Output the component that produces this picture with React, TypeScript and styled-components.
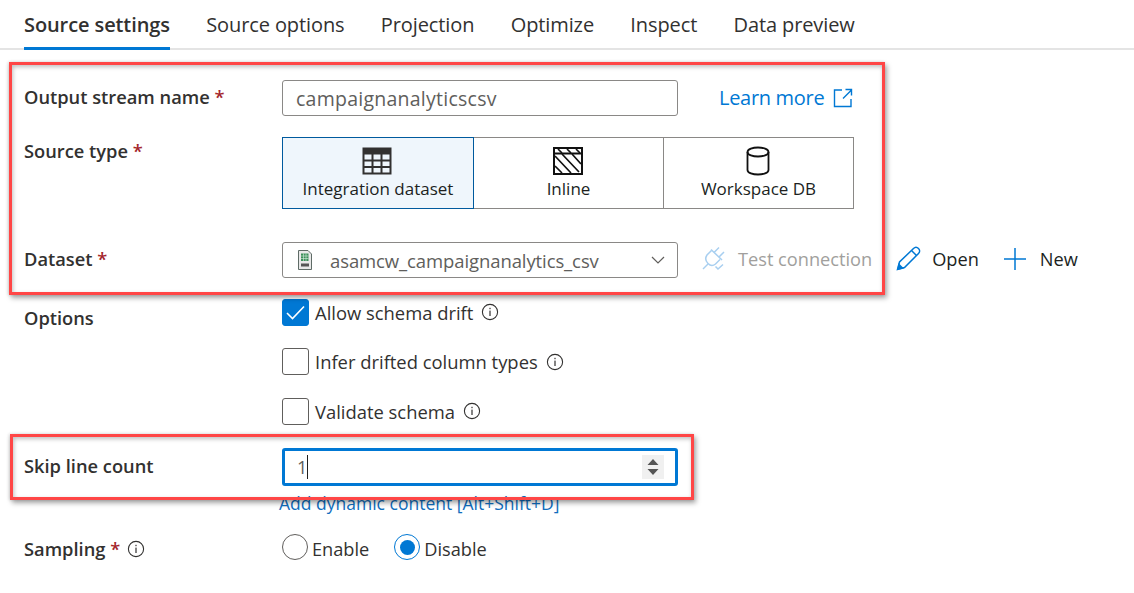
import React from "react";
import styled, { createGlobalStyle } from "styled-components";

const Global = createGlobalStyle`
  html, body { margin: 0; padding: 0; background: #fff; }
  body { font-family: "Open Sans", "Noto Sans", "Liberation Sans", sans-serif; color: #323130; }
`;
const Page = styled.div`
  position: relative;
  width: 1134px;
  height: 593px;
  overflow: hidden;
  font-size: 18px;
`;
const Tabs = styled.div`
  display: flex;
  gap: 36.3px;
  height: 48px;
  padding-left: 24px;
  border-bottom: 2px solid #e4e4e4;
`;
const Tab = styled.div<{ $active?: boolean }>`
  height: 47px;
  line-height: 50px;
  box-sizing: border-box;
  font-size: 20px;
  font-weight: ${(p) => (p.$active ? 600 : 400)};
  letter-spacing: -0.1px;
  box-shadow: ${(p) => (p.$active ? "0 3px 0 #0078d4" : "none")};
  white-space: nowrap;
`;
const Form = styled.div`
  display: flex;
  flex-direction: column;
  padding-left: 24px;
`;
const Row = styled.div<{ $top: number }>`
  display: grid;
  grid-template-columns: 258px 1fr;
  margin-top: ${(p) => p.$top}px;
  align-items: start;
`;
const Label = styled.div<{ $pad: number }>`
  display: flex;
  align-items: center;
  gap: 7px;
  padding-top: ${(p) => p.$pad}px;
  font-size: 18.3px;
  line-height: 24px;
  font-weight: 600;
  white-space: nowrap;
`;
const Star = styled.span`
  color: #a4262c;
  font-weight: 600;
`;
const Controls = styled.div`
  display: flex;
  align-items: center;
`;
const Field = styled.div`
  width: 396px;
  height: 36px;
  box-sizing: border-box;
  border: 1px solid #8a8886;
  border-radius: 3px;
  display: flex;
  align-items: center;
  padding: 0 13px;
  color: #605e5c;
  font-size: 19.5px;
  letter-spacing: 0.25px;
  flex: none;
`;
const SelectField = styled(Field)`
  padding: 0 12px 0 15px;
  gap: 18px;
  font-size: 18.5px;
  letter-spacing: -0.1px;
`;
const SelectText = styled.span`
  flex: 1;
`;
const LearnLink = styled.a`
  display: flex;
  align-items: center;
  gap: 9px;
  margin-left: 41px;
  color: #0078d4;
  font-size: 20px;
  letter-spacing: -0.3px;
  line-height: 24px;
`;
const Segments = styled.div`
  display: grid;
  grid-template-columns: 192px 190px 190px;
  height: 72px;
`;
const Segment = styled.div<{ $selected?: boolean; $first?: boolean }>`
  box-sizing: border-box;
  display: flex;
  flex-direction: column;
  align-items: center;
  padding-top: 8px;
  gap: 1px;
  font-size: 17px;
  color: #201f1e;
  border: 1px solid ${(p) => (p.$selected ? "#005a9e" : "#8a8886")};
  border-left-width: ${(p) => (p.$first ? 1 : 0)}px;
  background: ${(p) => (p.$selected ? "#eff6fc" : "#fff")};
  line-height: 24px;
`;
const SegmentIcon = styled.div`
  height: 30px;
  display: flex;
  align-items: center;
  margin-left: -2px;
`;
const Action = styled.div<{ $muted?: boolean; $left: number; $gap: number }>`
  display: flex;
  align-items: center;
  gap: ${(p) => p.$gap}px;
  margin-left: ${(p) => p.$left}px;
  padding-bottom: 3px;
  color: ${(p) => (p.$muted ? "#a19f9d" : "#201f1e")};
  font-size: 18.2px;
  white-space: nowrap;
`;
const Checks = styled.div`
  display: flex;
  flex-direction: column;
  gap: 23.5px;
`;
const CheckRow = styled.div`
  display: flex;
  align-items: center;
  gap: 6px;
  height: 26px;
  font-size: 18.4px;
`;
const Box = styled.div<{ $on?: boolean }>`
  width: 27px;
  height: 27px;
  box-sizing: border-box;
  border-radius: 3px;
  border: 1px solid ${(p) => (p.$on ? "#0078d4" : "#605e5c")};
  background: ${(p) => (p.$on ? "#0078d4" : "#fff")};
  display: flex;
  align-items: center;
  justify-content: center;
  flex: none;
`;
const InfoSlot = styled.span`
  display: flex;
  margin-left: 2px;
`;
const NumberField = styled.div`
  width: 396px;
  height: 38px;
  box-sizing: border-box;
  border: 3px solid #0078d4;
  border-radius: 3px;
  display: flex;
  align-items: center;
  padding-left: 12px;
  font-size: 18px;
  color: #605e5c;
`;
const Caret = styled.span`
  width: 1px;
  height: 24px;
  background: #201f1e;
`;
const Stepper = styled.div`
  margin-left: auto;
  margin-right: 11px;
  width: 22px;
  height: 24px;
  background: #f0f0f0;
  display: flex;
  align-items: center;
  justify-content: center;
`;
const DynamicLink = styled.a`
  grid-column: 2;
  margin-left: -3px;
  color: #106ebe;
  font-size: 17.5px;
  line-height: 20px;
`;
const Radios = styled.div`
  display: flex;
  align-items: center;
`;
const RadioItem = styled.div`
  display: flex;
  align-items: center;
  gap: 4px;
  margin-right: 25px;
  font-size: 18.2px;
`;
const Radio = styled.div<{ $on?: boolean }>`
  width: 26px;
  height: 26px;
  margin-bottom: 3px;
  box-sizing: border-box;
  border-radius: 50%;
  border: 1px solid ${(p) => (p.$on ? "#0078d4" : "#605e5c")};
  display: flex;
  align-items: center;
  justify-content: center;
  &::after {
    content: "";
    display: ${(p) => (p.$on ? "block" : "none")};
    width: 15px;
    height: 15px;
    border-radius: 50%;
    background: #0078d4;
  }
`;
const Highlight = styled.div<{ $x: number; $y: number; $w: number; $h: number }>`
  position: absolute;
  left: ${(p) => p.$x}px;
  top: ${(p) => p.$y}px;
  width: ${(p) => p.$w}px;
  height: ${(p) => p.$h}px;
  box-sizing: border-box;
  border: 3px solid #ff4646;
  box-shadow: 2px 3px 5px rgba(0, 0, 0, 0.35), -1px 0 3px rgba(0, 0, 0, 0.15),
    inset 1px 2px 4px rgba(0, 0, 0, 0.25);
  pointer-events: none;
`;

const Info = () => (
  <svg width="18" height="18" viewBox="0 0 18 18" fill="none" style={{ flex: "none" }}>
    <circle cx="9" cy="9" r="7.6" stroke="#323130" strokeWidth="1.1" />
    <rect x="8.4" y="7.6" width="1.2" height="5.4" fill="#323130" />
    <rect x="8.4" y="4.8" width="1.2" height="1.4" fill="#323130" />
  </svg>
);
const External = () => (
  <svg width="20" height="20" viewBox="0 0 20 20" fill="none" stroke="#0078d4" strokeWidth="1.4">
    <path d="M9 2H1.5V18.5H18V11" />
    <path d="M10 10.5L18 2.5M12.5 1.5H18.5V7.5" />
  </svg>
);
const TableIcon = () => (
  <svg width="30" height="28" viewBox="0 0 30 28" fill="none">
    <rect x="1.5" y="1.5" width="27" height="25" stroke="#323130" strokeWidth="2" />
    <rect x="1.5" y="1.5" width="27" height="6" fill="#323130" />
    <path d="M2 13.5H28M2 20H28M10.5 7V26M19.5 7V26" stroke="#323130" strokeWidth="2" />
  </svg>
);
const HatchIcon = () => (
  <svg width="30" height="28" viewBox="0 0 30 28" fill="none">
    <rect x="1" y="1" width="28" height="26" stroke="#111" strokeWidth="2" />
    <path d="M1 6.5H29" stroke="#111" strokeWidth="2" />
    <path d="M5 2L9 6M14 2L18 6M23 2L27 6M2 9L18 26M9 7L26 25M19 7L28 17M2 19L9 26" stroke="#111" strokeWidth="1.7" />
  </svg>
);
const DbIcon = () => (
  <svg width="26" height="30" viewBox="0 0 26 30" fill="none" stroke="#111" strokeWidth="1.8">
    <path d="M2.5 6C2.5 3 8 1.5 13 1.5S23.5 3 23.5 6V24C23.5 27 18 28.5 13 28.5S2.5 27 2.5 24Z" />
    <path d="M2.5 6C2.5 9 8 10.5 13 10.5S23.5 9 23.5 6" />
  </svg>
);
const CsvIcon = () => (
  <svg width="14" height="20" viewBox="0 0 14 20" fill="none">
    <path d="M.5 .5H10L13.5 4V19.5H.5Z" fill="#e8e8e8" stroke="#5f6b66" />
    <rect x="3" y="3.5" width="7.5" height="7.5" fill="#3c8f5a" />
    <path d="M3 6H10.5M3 8.5H10.5M5.5 3.5V11M8 3.5V11" stroke="#d8efe0" strokeWidth=".6" />
    <rect x="3" y="13.5" width="8" height="3" fill="#555" />
  </svg>
);
const Chevron = () => (
  <svg width="14" height="8" viewBox="0 0 14 8" fill="none" stroke="#605e5c" strokeWidth="1.2" style={{ flex: "none" }}>
    <path d="M1 1L7 7L13 1" />
  </svg>
);
const PlugCheck = () => (
  <svg width="25" height="25" viewBox="0 0 25 25" fill="none" stroke="#a8cff0" strokeWidth="1.5">
    <path d="M1 23L6 18" />
    <path d="M9 3.5L20 14" />
    <path d="M9.5 4.5L5 9C3 12 3.5 15 6 17.5C8.5 20 11 20 13.5 18L18 13.5" />
    <path d="M12 6.5L17 1.5M17 11L22 6" />
    <path d="M13.5 20.5L16 23L21 18.5" />
  </svg>
);
const Pencil = () => (
  <svg width="25" height="25" viewBox="0 0 25 25" fill="none" stroke="#0078d4" strokeWidth="1.5">
    <path d="M1.5 23.5L3.5 16L17.5 2.5C19 1 21 1 22.5 2.5S24 6 22.5 7.5L8.5 21.5Z" />
    <path d="M15.5 4.5L20.5 9.5" />
    <path d="M2 23L3 18.5L6.5 22Z" fill="#0078d4" />
  </svg>
);
const Plus = () => (
  <svg width="24" height="24" viewBox="0 0 24 24" fill="none" stroke="#0078d4" strokeWidth="1.5">
    <path d="M12 1V23M1 12H23" />
  </svg>
);
const Check = () => (
  <svg width="19" height="15" viewBox="0 0 19 15" fill="none" stroke="#fff" strokeWidth="1.6">
    <path d="M1 8L6.5 13.5L18 1.5" />
  </svg>
);
const Spin = () => (
  <svg width="12" height="18" viewBox="0 0 12 18" fill="#555">
    <path d="M6 1L11.5 7H.5ZM6 17L.5 11H11.5Z" />
  </svg>
);

const tabs = ["Source options", "Projection", "Optimize", "Inspect", "Data preview"];

export default function App() {
  return (
    <Page>
      <Global />
      <Tabs>
        <Tab $active>Source settings</Tab>
        {tabs.map((t) => (
          <Tab key={t}>{t}</Tab>
        ))}
      </Tabs>
      <Form>
        <Row $top={30}>
          <Label $pad={5}>
            <span>Output stream name <Star>*</Star></span>
          </Label>
          <Controls>
            <Field>campaignanalyticscsv</Field>
            <LearnLink>
              Learn more
              <External />
            </LearnLink>
          </Controls>
        </Row>
        <Row $top={21}>
          <Label $pad={2}>
            <span>Source type <Star>*</Star></span>
          </Label>
          <Segments>
            <Segment $selected $first><SegmentIcon><TableIcon /></SegmentIcon>Integration dataset</Segment>
            <Segment><SegmentIcon><HatchIcon /></SegmentIcon>Inline</Segment>
            <Segment><SegmentIcon><DbIcon /></SegmentIcon>Workspace DB</Segment>
          </Segments>
        </Row>
        <Row $top={33}>
          <Label $pad={5}>
            <span>Dataset <Star>*</Star></span>
          </Label>
          <Controls>
            <SelectField>
              <CsvIcon />
              <SelectText>asamcw_campaignanalytics_csv</SelectText>
              <Chevron />
            </SelectField>
            <Action $muted $left={24} $gap={11}><PlugCheck />Test connection</Action>
            <Action $left={24} $gap={11}><Pencil />Open</Action>
            <Action $left={24} $gap={13}><Plus />New</Action>
          </Controls>
        </Row>
        <Row $top={21}>
          <Label $pad={7}>Options</Label>
          <Checks>
            <CheckRow><Box $on><Check /></Box>Allow schema drift<InfoSlot><Info /></InfoSlot></CheckRow>
            <CheckRow><Box />Infer drifted column types<InfoSlot><Info /></InfoSlot></CheckRow>
            <CheckRow><Box />Validate schema<InfoSlot><Info /></InfoSlot></CheckRow>
          </Checks>
        </Row>
        <Row $top={24}>
          <Label $pad={6}>Skip line count</Label>
          <NumberField>
            1<Caret />
            <Stepper><Spin /></Stepper>
          </NumberField>
        </Row>
        <Row $top={7}>
          <DynamicLink>Add dynamic content [Alt+Shift+D]</DynamicLink>
        </Row>
        <Row $top={21}>
          <Label $pad={3}>
            <span>Sampling <Star>*</Star></span>
            <Info />
          </Label>
          <Radios>
            <RadioItem><Radio />Enable</RadioItem>
            <RadioItem><Radio $on />Disable</RadioItem>
          </Radios>
        </Row>
      </Form>
      <Highlight $x={9} $y={62} $w={876} $h={233} />
      <Highlight $x={10} $y={434} $w={684} $h={66} />
    </Page>
  );
}
